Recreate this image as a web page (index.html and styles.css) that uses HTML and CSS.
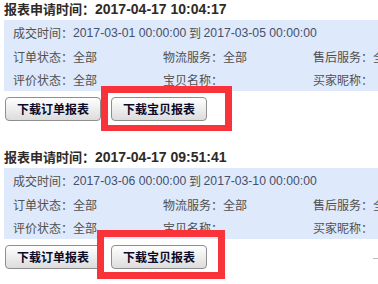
FILE: index.html
```html
<!DOCTYPE html>
<html>
<head>
<meta charset="utf-8">
<link rel="stylesheet" href="styles.css">
</head>
<body>
<div class="page">
  <div class="block">
    <div class="head">报表申请时间：<span class="htime">2017-04-17 10:04:17</span></div>
    <div class="info">
      <div class="row r1"><span class="lab">成交时间：</span><span class="num">2017-03-01 00:00:00</span> 到 <span class="num">2017-03-05 00:00:00</span></div>
      <div class="row r2"><span class="col">订单状态：全部</span><span class="col">物流服务：全部</span><span class="col">售后服务：全部</span></div>
      <div class="row r3"><span class="col">评价状态：全部</span><span class="col">宝贝名称：</span><span class="col">买家昵称：</span></div>
    </div>
    <div class="btns">
      <button class="btn">下载订单报表</button>
      <button class="btn">下载宝贝报表</button>
    </div>
    <div class="mark m1"></div>
  </div>
  <div class="block">
    <div class="head">报表申请时间：<span class="htime">2017-04-17 09:51:41</span></div>
    <div class="info">
      <div class="row r1"><span class="lab">成交时间：</span><span class="num">2017-03-06 00:00:00</span> 到 <span class="num">2017-03-10 00:00:00</span></div>
      <div class="row r2"><span class="col">订单状态：全部</span><span class="col">物流服务：全部</span><span class="col">售后服务：全部</span></div>
      <div class="row r3"><span class="col">评价状态：全部</span><span class="col">宝贝名称：</span><span class="col">买家昵称：</span></div>
    </div>
    <div class="btns">
      <button class="btn">下载订单报表</button>
      <button class="btn">下载宝贝报表</button>
    </div>
    <div class="mark m2"></div>
    <div class="dash"></div>
  </div>
</div>
</body>
</html>
```
FILE: styles.css
```css
html, body {
  margin: 0;
  padding: 0;
  overflow: hidden;
  background: #fff;
}
.page {
  width: 378px;
  overflow: hidden;
  font-family: "Liberation Sans", "Noto Sans CJK SC", sans-serif;
}
.block {
  position: relative;
  height: 148px;
  padding-left: 4px;
}
.head {
  font-family: "Noto Sans CJK SC", sans-serif;
  font-size: 13px;
  font-weight: bold;
  color: #2e2a26;
  line-height: 18px;
  height: 18px;
  margin-bottom: 2px;
  white-space: nowrap;
}
.htime {
  font-family: "Liberation Sans", sans-serif;
  font-size: 14px;
}
.info {
  background: #dee9fb;
  height: 71px;
  padding: 1px 0 0 9px;
  box-sizing: border-box;
  width: 400px;
  font-family: "Noto Sans CJK SC", sans-serif;
  font-size: 12px;
  color: #505050;
  white-space: nowrap;
}
.row {
  display: flex;
}
.r1 { height: 24px; line-height: 24px; white-space: pre; }
.r2 { height: 24px; line-height: 24px; }
.r3 { height: 22px; line-height: 22px; }
.num {
  font-family: "Liberation Sans", sans-serif;
  font-size: 12.2px;
  color: #45506b;
}
.col {
  width: 150px;
  flex: none;
}
.btns {
  display: flex;
  gap: 10px;
  margin-top: 6px;
  padding-left: 1px;
}
.btn {
  height: 24px;
  padding: 0 11px;
  border: 1px solid #8e8e8e;
  border-radius: 4px;
  background: linear-gradient(#ffffff, #dcdcdc);
  font-family: "Noto Sans CJK SC", sans-serif;
  font-size: 12px;
  font-weight: bold;
  color: #0a0a2a;
  line-height: 22px;
  margin: 0;
}
.mark {
  position: absolute;
  border-style: solid;
  border-color: #f8333a;
  box-sizing: border-box;
}
.m1 {
  left: 101px;
  top: 86px;
  width: 131px;
  height: 45px;
  border-width: 7px 7px 6px 7px;
}
.m2 {
  left: 97px;
  top: 82px;
  width: 128px;
  height: 49px;
  border-width: 7px;
}
.dash {
  position: absolute;
  left: 373px;
  top: 110px;
  width: 5px;
  height: 1px;
  background: #bbb;
}
```
